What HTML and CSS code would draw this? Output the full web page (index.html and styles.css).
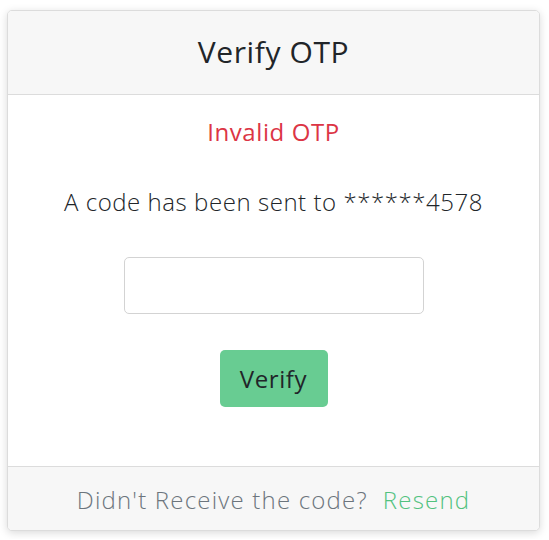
FILE: index.html
```html
<!DOCTYPE html>
<html>
<head>
<meta charset="utf-8">
<link rel="stylesheet" href="styles.css">
</head>
<body>
<div class="card">
  <div class="card-header">Verify OTP</div>
  <div class="card-body">
    <div class="error">Invalid OTP</div>
    <div class="sent">A code has been sent to ******4578</div>
    <input class="otp" type="text">
    <button class="btn">Verify</button>
  </div>
  <div class="card-footer">
    <span class="q">Didn't Receive the code?</span>
    <a class="resend" href="#">Resend</a>
  </div>
</div>
</body>
</html>
```
FILE: styles.css
```css
html, body {
  margin: 0;
  padding: 0;
  background: #ffffff;
}
body {
  padding: 10px 9px 8px 7px;
  font-family: "Open Sans", "Liberation Sans", sans-serif;
}
.card {
  width: 533px;
  box-sizing: border-box;
  border: 1px solid #dcdcdc;
  border-radius: 5px;
  background: #fff;
  box-shadow: 0 2px 8px rgba(0,0,0,0.15);
  overflow: hidden;
}
.card-header {
  height: 84px;
  box-sizing: border-box;
  background: #f7f7f7;
  border-bottom: 1px solid #dcdcdc;
  display: flex;
  align-items: center;
  justify-content: center;
  font-size: 30px;
  font-weight: 500;
  letter-spacing: 0.6px;
  color: #212529;
  padding-bottom: 2px;
}
.card-body {
  height: 371px;
  box-sizing: border-box;
  display: flex;
  flex-direction: column;
  align-items: center;
  padding-top: 22px;
}
.error {
  color: #dc3545;
  font-size: 24px;
  letter-spacing: 0.6px;
  line-height: 30px;
}
.sent {
  margin-top: 40px;
  font-size: 24px;
  font-weight: 300;
  letter-spacing: 0.55px;
  color: #212529;
  line-height: 30px;
}
.otp {
  margin-top: 40px;
  width: 300px;
  height: 57px;
  box-sizing: border-box;
  border: 1px solid #d3d3d3;
  border-radius: 5px;
  outline: none;
}
.btn {
  margin-top: 36px;
  width: 108px;
  height: 57px;
  border: none;
  border-radius: 5px;
  background: #68cc92;
  color: #212529;
  font-family: inherit;
  font-size: 24px;
  font-weight: 500;
  letter-spacing: 0.6px;
}
.card-footer {
  height: 64px;
  box-sizing: border-box;
  background: #f7f7f7;
  border-top: 1px solid #dcdcdc;
  display: flex;
  align-items: center;
  justify-content: center;
  gap: 15px;
  font-size: 24px;
  font-weight: 300;
  letter-spacing: 1.2px;
  padding-top: 2px;
}
.q { color: #6c757d; }
.resend { color: #52c27f; text-decoration: none; }
```
